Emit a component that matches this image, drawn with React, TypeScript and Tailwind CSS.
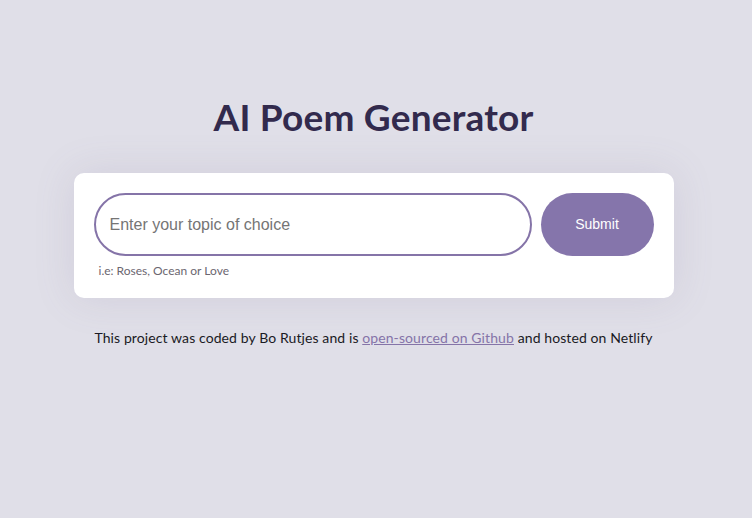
export default function App() {
  return (
    <div className="min-h-[518px] bg-[#e0dfe8] flex flex-col items-center pt-[93px] pr-[5px] font-['Lato',sans-serif]">
      <h1 className="text-[37px] font-bold text-[#322a4d] leading-[48px] tracking-[0.2px]">AI Poem Generator</h1>

      <div className="mt-[32px] w-[600px] bg-white rounded-[10px] shadow-[0_0_40px_rgba(120,110,150,0.15)] px-[20px] pt-[20px] pb-[20px]">
        <form className="flex items-center gap-[9px]" onSubmit={(e) => e.preventDefault()}>
          <input
            type="text"
            placeholder="Enter your topic of choice"
            className="w-[438px] h-[63px] rounded-full border-2 border-[#8574a8] px-[14px] text-[16px] font-['Liberation_Sans',Arial,sans-serif] placeholder:text-[#757575] outline-none"
          />
          <button
            type="submit"
            className="w-[113px] h-[63px] rounded-full bg-[#8575ab] text-white text-[14px] font-normal font-['Liberation_Sans',Arial,sans-serif]"
          >
            Submit
          </button>
        </form>
        <p className="mt-[7px] ml-[5px] text-[12px] text-[#6b6670] leading-[15px]">i.e: Roses, Ocean or Love</p>
      </div>

      <p className="mt-[31px] text-[14px] tracking-[0.1px] text-[#1a1a24] leading-[18px]">
        This project was coded by Bo Rutjes and is{" "}
        <a href="#" className="text-[#8574a8] underline">open-sourced on Github</a>{" "}
        and hosted on Netlify
      </p>
    </div>
  )
}
